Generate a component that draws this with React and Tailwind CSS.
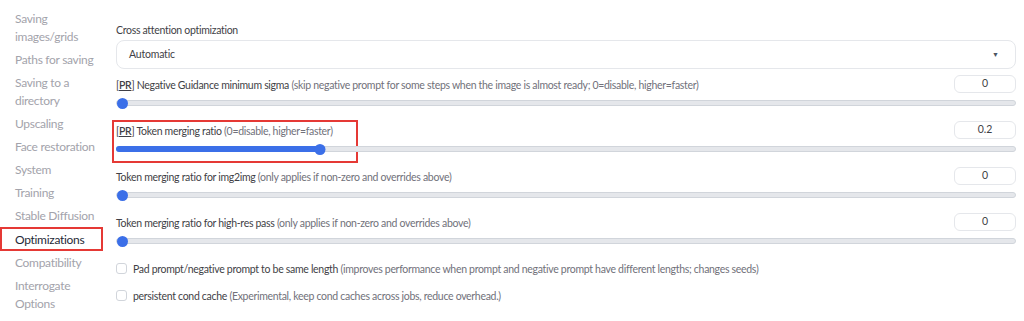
// App.jsx
// Settings page — optimizations section

const NAV = [
  "Saving images/grids",
  "Paths for saving",
  "Saving to a directory",
  "Upscaling",
  "Face restoration",
  "System",
  "Training",
  "Stable Diffusion",
  "Optimizations",
  "Compatibility",
  "Interrogate Options",
];

const SLIDERS = [
  { pr: true, label: "Negative Guidance minimum sigma", hint: "(skip negative prompt for some steps when the image is almost ready; 0=disable, higher=faster)", value: "0", pct: 0 },
  { pr: true, label: "Token merging ratio", hint: "(0=disable, higher=faster)", value: "0.2", pct: 22.6, boxed: true },
  { label: "Token merging ratio for img2img", hint: "(only applies if non-zero and overrides above)", value: "0", pct: 0 },
  { label: "Token merging ratio for high-res pass", hint: "(only applies if non-zero and overrides above)", value: "0", pct: 0 },
];

function Slider({ item }) {
  return (
    <div className="h-[46px] relative">
      {item.boxed && (
        <div className="absolute left-[-4px] top-[5px] w-[246px] h-[43px] border-2 border-[#e53935]" />
      )}
      <div className="flex items-start justify-between h-[29px] pt-[6px]">
        <div className="text-[10.5px] tracking-[-0.3px] leading-[14px] pt-[3px]">
          {item.pr && (
            <span className="text-[#3f3f46]">
              [<span className="underline font-semibold">PR</span>]{" "}
            </span>
          )}
          <span className="text-[#3f3f46]">{item.label}</span>{" "}
          <span className="text-[#71717a]">{item.hint}</span>
        </div>
        <div className="w-[62px] h-[18px] border border-[#e5e7eb] rounded-md text-[10.5px] text-[#3f3f46] flex items-center justify-center">
          {item.value}
        </div>
      </div>
      <div className="relative h-[10px] flex items-center">
        <div className="w-full h-[6px] rounded-full bg-[#e5e7eb] border border-[#d1d5db]" />
        {item.pct > 0 && (
          <div className="absolute left-0 h-[6px] rounded-full bg-[#3b6fe8]" style={{ width: `${item.pct}%` }} />
        )}
        <div
          className="absolute w-[11px] h-[11px] rounded-full bg-[#3b6fe8]"
          style={{ left: `calc(${item.pct}% + 1px)`, transform: item.pct > 0 ? "translateX(-50%)" : "none" }}
        />
      </div>
    </div>
  );
}

function Check({ label, hint }) {
  return (
    <div className="flex items-center gap-[6px] h-[27px]">
      <div className="w-[11px] h-[11px] border border-[#d1d5db] rounded-[3px] bg-white" />
      <div className="text-[10.5px] tracking-[-0.3px] leading-[14px]">
        <span className="text-[#3f3f46]">{label}</span>{" "}
        <span className="text-[#71717a]">{hint}</span>
      </div>
    </div>
  );
}

export default function App() {
  return (
    <div className="w-[1024px] h-[321px] bg-white flex overflow-hidden" style={{ fontFamily: "Lato, 'Liberation Sans', sans-serif" }}>
      {/* Sidebar */}
      <div className="w-[112px] pt-[7px] flex flex-col">
        {NAV.map((n) =>
          n === "Optimizations" ? (
            <div key={n} className="w-[103px] pl-[13px] py-[1.5px] border-2 border-[#e53935] text-[#1f2937] text-[12px] tracking-[-0.3px] leading-[17px]">
              {n}
            </div>
          ) : (
            <div key={n} className="w-[100px] pl-[15px] py-[2.5px] text-[#a3a3ab] text-[12px] tracking-[-0.3px] leading-[18px]">
              {n}
            </div>
          )
        )}
      </div>

      {/* Main */}
      <div className="flex-1 pl-[4px] pr-[8px] pt-[23px]">
        <div className="text-[10.5px] tracking-[-0.3px] text-[#3f3f46] leading-[14px]">Cross attention optimization</div>
        <div className="mt-[3px] h-[29px] border border-[#e5e7eb] rounded-lg flex items-center justify-between pl-[12px] pr-[16px]">
          <span className="text-[10.5px] tracking-[-0.2px] text-[#3f3f46]">Automatic</span>
          <span className="text-[7px] text-[#4b5563]">▼</span>
        </div>
        {SLIDERS.map((s) => (
          <Slider key={s.label} item={s} />
        ))}
        <div className="pt-[2px]">
          <Check label="Pad prompt/negative prompt to be same length" hint="(improves performance when prompt and negative prompt have different lengths; changes seeds)" />
          <Check label="persistent cond cache" hint="(Experimental, keep cond caches across jobs, reduce overhead.)" />
        </div>
      </div>
    </div>
  );
}
